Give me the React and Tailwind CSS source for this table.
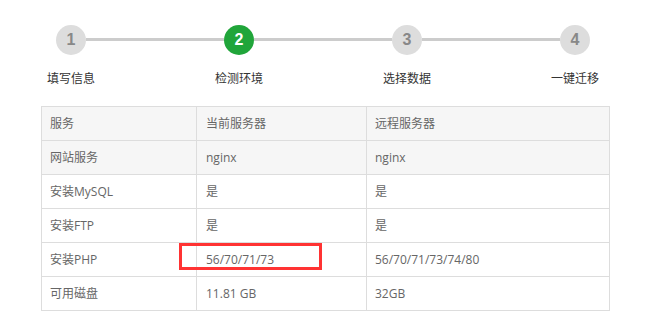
import React from 'react';

const steps = [
  { n: 1, label: '填写信息' },
  { n: 2, label: '检测环境', active: true },
  { n: 3, label: '选择数据' },
  { n: 4, label: '一键迁移' },
];

const rows = [
  ['网站服务', 'nginx', 'nginx'],
  ['安装MySQL', '是', '是'],
  ['安装FTP', '是', '是'],
  ['安装PHP', '56/70/71/73', '56/70/71/73/74/80'],
  ['可用磁盘', '11.81 GB', '32GB'],
];

function Step({ n, label, active }) {
  return (
    <div className="flex flex-col items-center w-[30px] shrink-0">
      <div
        className={
          active
            ? 'w-[30px] h-[30px] rounded-full bg-[#20a53a] text-white flex items-center justify-center text-[16px] font-bold'
            : 'w-[30px] h-[30px] rounded-full bg-[#dddddd] text-[#888] flex items-center justify-center text-[16px] font-bold'
        }
        style={{ fontFamily: 'Arial, "Liberation Sans", sans-serif' }}
      >
        {n}
      </div>
      <div className="mt-[16px] whitespace-nowrap text-[12px] leading-[16px] text-[#333]">{label}</div>
    </div>
  );
}

export default function App() {
  return (
    <div
      className="w-[648px] h-[330px] bg-white overflow-hidden"
      style={{ fontFamily: '"Open Sans", "Noto Sans CJK SC", sans-serif' }}
    >
      {/* steps */}
      <div className="flex items-start ml-[56px] w-[534px] pt-[25px]">
        {steps.map((s, i) => (
          <React.Fragment key={s.n}>
            <Step {...s} />
            {i < steps.length - 1 && <div className="flex-1 h-[3px] bg-[#cccccc] mt-[13px]" />}
          </React.Fragment>
        ))}
      </div>

      {/* table */}
      <div className="relative ml-[41px] mt-[19px] w-[568px]">
        <table className="w-[568px] border-collapse table-fixed text-[12px] text-[#666]">
          <colgroup>
            <col className="w-[155px]" />
            <col className="w-[170px]" />
            <col className="w-[243px]" />
          </colgroup>
          <thead>
            <tr className="bg-[#f6f6f6] h-[34px]">
              <th className="border border-[#dddddd] px-[8px] text-left font-normal">服务</th>
              <th className="border border-[#dddddd] px-[9px] text-left font-normal">当前服务器</th>
              <th className="border border-[#dddddd] px-[8px] text-left font-normal">远程服务器</th>
            </tr>
          </thead>
          <tbody>
            {rows.map((r, i) => (
              <tr key={r[0]} className={i === 0 ? 'bg-[#f6f6f6] h-[34px]' : 'bg-white h-[34px]'}>
                <td className="border border-[#dddddd] px-[8px]">{r[0]}</td>
                <td className="border border-[#dddddd] px-[9px]">{r[1]}</td>
                <td className="border border-[#dddddd] px-[8px]">{r[2]}</td>
              </tr>
            ))}
          </tbody>
        </table>
        {/* highlight annotation */}
        <div className="absolute left-[138px] top-[137px] w-[143px] h-[27px] border-[3px] border-[#ff3333]" />
      </div>
    </div>
  );
}
